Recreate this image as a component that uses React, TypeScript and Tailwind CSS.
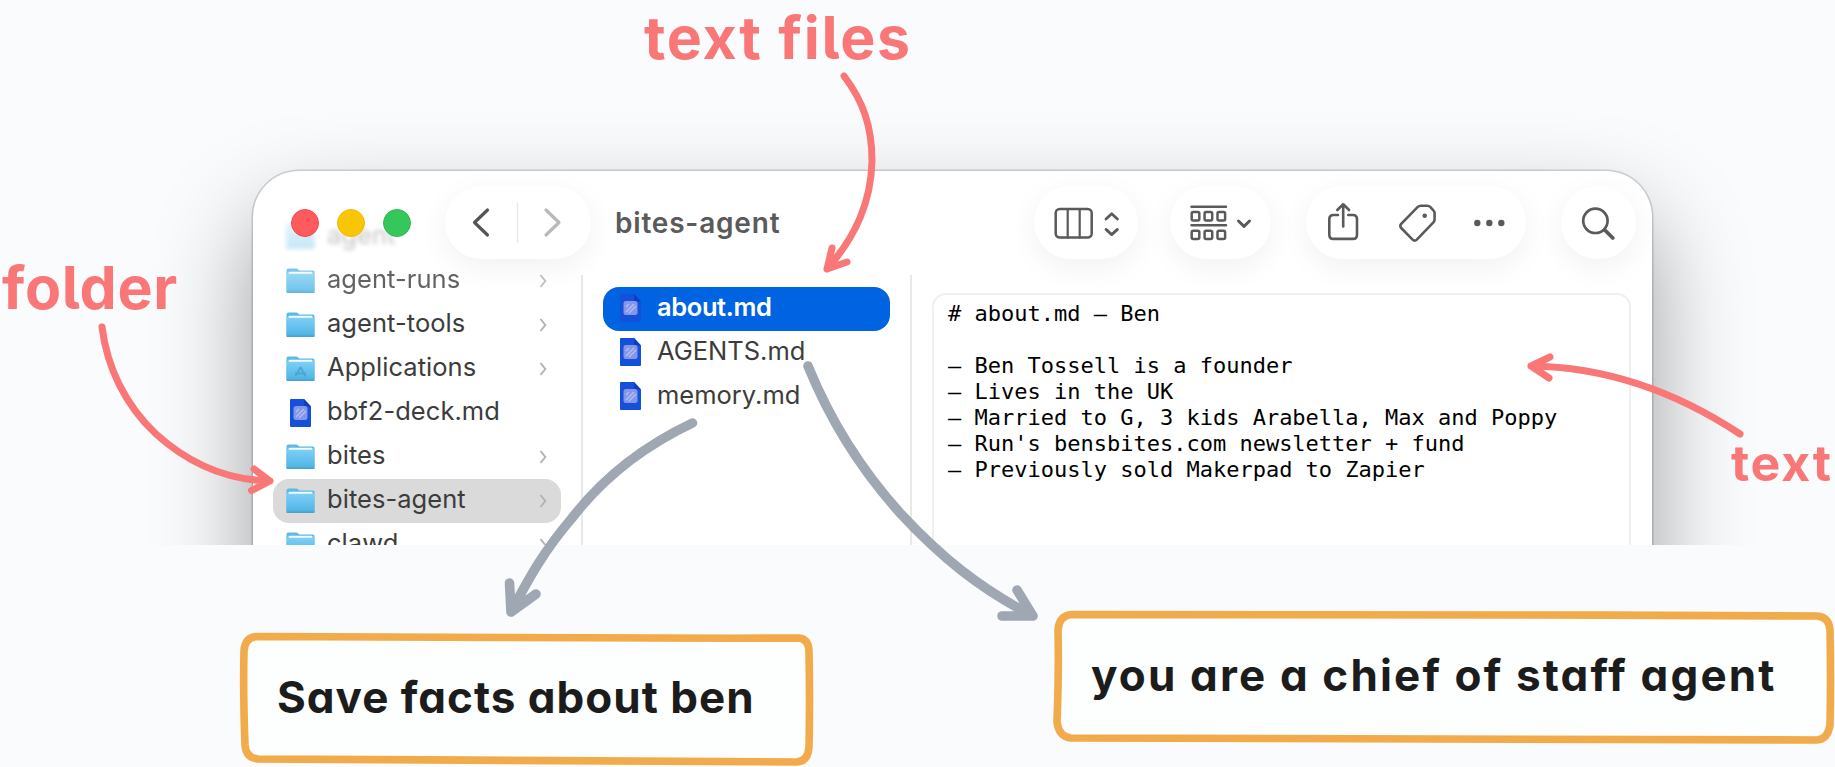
import React from "react";
import clsx from "clsx";

type Entry = {
  name: string;
  kind: "folder" | "apps" | "doc";
  selected?: boolean;
  fade?: string;
};

const SIDEBAR: Entry[] = [
  { name: "agent", kind: "folder", fade: "opacity-30 blur-[2px]" },
  { name: "agent-runs", kind: "folder", fade: "opacity-80" },
  { name: "agent-tools", kind: "folder" },
  { name: "Applications", kind: "apps" },
  { name: "bbf2-deck.md", kind: "doc" },
  { name: "bites", kind: "folder" },
  { name: "bites-agent", kind: "folder", selected: true },
  { name: "clawd", kind: "folder" },
];

const FILES = ["about.md", "AGENTS.md", "memory.md"];

const PREVIEW = `# about.md — Ben

– Ben Tossell is a founder
– Lives in the UK
– Married to G, 3 kids Arabella, Max and Poppy
– Run's bensbites.com newsletter + fund
– Previously sold Makerpad to Zapier`;

const FolderIcon: React.FC<{ apps?: boolean }> = ({ apps }) => (
  <svg width="29" height="26" viewBox="0 0 29 26">
    <defs>
      <linearGradient id="folder" x1="0" y1="0" x2="0" y2="1">
        <stop offset="0" stopColor="#7fd0f7" />
        <stop offset="0.85" stopColor="#52b7e6" />
        <stop offset="1" stopColor="#479fca" />
      </linearGradient>
    </defs>
    <path d="M0.5 2.5Q0.5 0.5 2.5 0.5H10Q11.5 0.5 12.5 1.8L13.3 2.4H27Q28.5 2.4 28.5 4V24Q28.5 25 27.5 25H1.5Q0.5 25 0.5 24Z" fill="#5fb9e4" />
    <path d="M0.5 7Q0.5 5 2.5 5H26.5Q28.5 5 28.5 7V24Q28.5 25 27.5 25H1.5Q0.5 25 0.5 24Z" fill="url(#folder)" />
    <rect x="2.5" y="3.8" width="24" height="2" rx="0.8" fill="#f3fbff" />
    {apps && (
      <path d="M14.5 11L9.5 20.5M14.5 11L19.5 20.5M9 17.5H20" stroke="#4aa6d3" strokeWidth="1.8" fill="none" />
    )}
  </svg>
);

const DocIcon: React.FC = () => (
  <svg width="21" height="28" viewBox="0 0 21 28">
    <path d="M0 1Q0 0 1 0H14L21 7.5V27Q21 28 20 28H1Q0 28 0 27Z" fill="#1450dc" />
    <path d="M14 0L21 7.5H16Q14 7.5 14 5.5Z" fill="#0d3fbd" />
    <rect x="3.5" y="7" width="14" height="14" rx="2.5" fill="#8496e6" />
    <path d="M6 18L14 10M9 19L16 12M6 13L9 10" stroke="#b5c0f3" strokeWidth="1.3" />
  </svg>
);

const Pill: React.FC<{ className?: string; children: React.ReactNode }> = ({ className, children }) => (
  <div
    className={clsx(
      "flex h-[73px] items-center rounded-full bg-white shadow-[0_8px_30px_rgba(0,0,0,0.06)]",
      className
    )}
  >
    {children}
  </div>
);

const Toolbar: React.FC = () => (
  <header className="relative z-10 flex h-[104px] items-start pt-[15px] pr-4 pl-[38px] text-[#5a5a5a]">
    <div className="flex h-[73px] items-center gap-[18px]">
      <span className="size-7 rounded-full border border-[#f2484c] bg-[#ff5b5f]" />
      <span className="size-7 rounded-full border border-[#efbb04] bg-[#f9c606]" />
      <span className="size-7 rounded-full border border-[#2fba4f] bg-[#35c75a]" />
    </div>
    <Pill className="ml-[34px] w-[146px]">
      <svg width="146" height="73" viewBox="0 0 146 73" fill="none" strokeWidth="3.2" strokeLinecap="round" strokeLinejoin="round">
        <path d="M42.5 24L29.5 36.5L42.5 49" stroke="#555" />
        <path d="M72.5 17V56" stroke="#e9e9e9" strokeWidth="1.5" />
        <path d="M101 24L114 36.5L101 49" stroke="#b9b9b9" />
      </svg>
    </Pill>
    <h1 className="ml-6 text-[28px] leading-[74px] font-semibold tracking-[0.8px] whitespace-nowrap">
      bites-agent
    </h1>
    <div className="ml-auto flex">
      <Pill className="w-[104px]">
        <svg width="104" height="73" viewBox="0 0 104 73" fill="none" stroke="currentColor" strokeWidth="2.5" strokeLinecap="round" strokeLinejoin="round">
          <rect x="21.7" y="23" width="36" height="28.6" rx="4" />
          <path d="M33.7 23V51.6M45.7 23V51.6" strokeWidth="2.2" />
          <path d="M72 33L77.7 27.8L83.4 33M72 43.4L77.7 48.6L83.4 43.4" strokeWidth="2.8" />
        </svg>
      </Pill>
      <Pill className="ml-8 w-[101px]">
        <svg width="101" height="73" viewBox="0 0 101 73" fill="none" stroke="currentColor" strokeWidth="2.5" strokeLinecap="round" strokeLinejoin="round">
          <path d="M21.5 20.7H56M21.5 39.3H56" />
          <rect x="21.7" y="26" width="7.6" height="8.4" rx="1.5" />
          <rect x="34.6" y="26" width="7.6" height="8.4" rx="1.5" />
          <rect x="47.5" y="26" width="7.6" height="8.4" rx="1.5" />
          <rect x="21.7" y="44.7" width="7.6" height="8.4" rx="1.5" />
          <rect x="34.6" y="44.7" width="7.6" height="8.4" rx="1.5" />
          <rect x="47.5" y="44.7" width="7.6" height="8.4" rx="1.5" />
          <path d="M68.5 35L74 40.4L79.5 35" strokeWidth="3" />
        </svg>
      </Pill>
      <Pill className="ml-[35px] w-[220px]">
        <svg width="220" height="73" viewBox="0 0 220 73" fill="none" stroke="currentColor" strokeWidth="2.6" strokeLinecap="round" strokeLinejoin="round">
          <path d="M32 29H27.5Q23.3 29 23.3 33.2V48.7Q23.3 52.9 27.5 52.9H46.8Q51 52.9 51 48.7V33.2Q51 29 46.8 29H42.3" />
          <path d="M37.2 40.5V18.5M31.3 24L37.2 18.3L43.1 24" />
          <path d="M95.2 37.8L111.8 20.9Q113 19.7 114.8 19.7H121.5Q123 19.7 124.2 20.9L127.4 24.3Q128.6 25.5 128.6 27V33.6Q128.6 35.2 127.4 36.4L110.8 53.6Q108.7 55.6 106.6 53.6L95.2 42Q93.4 39.9 95.2 37.8Z" />
          <g fill="currentColor" stroke="none">
            <circle cx="118.7" cy="29.7" r="2.3" />
            <circle cx="171.3" cy="37" r="3.2" />
            <circle cx="183.3" cy="37" r="3.2" />
            <circle cx="195.3" cy="37" r="3.2" />
          </g>
        </svg>
      </Pill>
      <Pill className="ml-[35px] w-[75px]">
        <svg width="75" height="73" viewBox="0 0 75 73" fill="none" stroke="currentColor" strokeWidth="2.7" strokeLinecap="round">
          <circle cx="34.4" cy="34.8" r="12.2" />
          <path d="M43.8 44L51.8 52" strokeWidth="3.8" />
        </svg>
      </Pill>
    </div>
  </header>
);

const Finder: React.FC = () => (
  <div className="ml-[253px] h-[900px] w-[1399px] shrink-0 rounded-[46px] bg-white shadow-[0_0_0_1.5px_rgba(0,0,0,0.15),0_46px_96px_rgba(0,0,0,0.38)]">
    <Toolbar />
    <div className="flex h-full text-[25.5px] text-[#3c3c3c]">
      <ul className="-mt-[60px] w-[328px] pr-5 pl-5">
        {SIDEBAR.map((item) => (
          <li
            key={item.name}
            className={clsx(
              "flex h-11 items-center rounded-2xl pr-[14px] pl-[13px]",
              item.selected && "bg-[#dadada]",
              item.fade
            )}
          >
            <span className="flex w-[29px] justify-center">
              {item.kind === "doc" ? <DocIcon /> : <FolderIcon apps={item.kind === "apps"} />}
            </span>
            <span className="ml-3 pb-[3px] tracking-[0.05px] whitespace-nowrap">{item.name}</span>
            {item.kind !== "doc" && (
              <svg className="ml-auto" width="8" height="14" viewBox="0 0 8 14" fill="none" stroke="#b4b4b4" strokeWidth="2">
                <path d="M1.5 1L6.3 7L1.5 13" />
              </svg>
            )}
          </li>
        ))}
      </ul>
      <ul className="w-[331px] border-x-2 border-[#e8e8e8] pt-3 pr-5 pl-5">
        {FILES.map((name, i) => (
          <li
            key={name}
            className={clsx(
              "flex h-11 items-center rounded-2xl pb-[3px] pl-[17px] whitespace-nowrap",
              i === 0 && "bg-[#0063e1] font-semibold tracking-[-0.4px] text-white"
            )}
          >
            <DocIcon />
            <span className="ml-4">{name}</span>
          </li>
        ))}
      </ul>
      <div className="flex-1 pt-[18px] pr-[21px] pl-5">
        <pre className="h-full rounded-[14px] border-2 border-[#f0f0f0] pt-[6px] pl-[14px] font-['DejaVu_Sans_Mono',monospace] text-[22px] leading-[26px] text-black">
          {PREVIEW}
        </pre>
      </div>
    </div>
  </div>
);

// Hand drawn arrows: a curved shaft plus a two-stroke head
const Arrows: React.FC = () => (
  <svg
    className="pointer-events-none absolute inset-0 z-20"
    width="1835"
    height="767"
    viewBox="0 0 1835 767"
    fill="none"
    strokeLinecap="round"
    strokeLinejoin="round"
  >
    <g stroke="#f97777" strokeWidth="7">
      <path d="M102 327C107 367 125 405 156 434C188 463 226 480 270 481M254 469L270 481L251.500 490.500" />
      <path d="M844 76C863 101 872 126 872 161C871 202 856 236 827 269M832 248L827 269L847 262" />
      <path d="M1740 434C1678 393 1607 367 1531 366M1550 357L1531 366L1549 378" />
    </g>
    <g stroke="#9fa7b3" strokeWidth="9.6">
      <path d="M692.500 423C646 445 606 474 572 518C544 551 530 576 511 612M509.500 583L511 612L536 594" />
      <path d="M808 366C832 425 863 472 901 514C941 557 979 588 1033 616M1017 590L1033 616L1002 616" />
    </g>
  </svg>
);

const Note: React.FC<{ className: string; outline: string; children: React.ReactNode }> = ({
  className,
  outline,
  children,
}) => (
  <div className={clsx("absolute h-[134px]", className)}>
    <svg className="absolute inset-0 size-full overflow-visible">
      <path d={outline} fill="#fdfefe" stroke="#f1ab4a" strokeWidth="7.600" strokeLinejoin="round" />
    </svg>
    <p className="relative pl-[38px] text-[44px] leading-none font-bold whitespace-nowrap text-[#1c1c1c]">
      {children}
    </p>
  </div>
);

const hand = "font-['Inter','Noto_Sans',sans-serif] [font-feature-settings:'cv11','cv05']";

export default function App() {
  return (
    <main className="relative h-[767px] w-[1835px] overflow-hidden bg-[#f9fbfd] font-['Inter','Noto_Sans',sans-serif]">
      <section className="h-[545px] overflow-hidden pt-[171px]">
        <Finder />
      </section>

      <div className={hand}>
        <p className="absolute top-[8px] left-[644px] z-20 text-[59px] leading-none font-bold tracking-[1.7px] whitespace-nowrap text-[#f97777]">
          text files
        </p>
        <p className="absolute top-[258px] left-[2px] z-20 text-[59px] leading-none font-bold tracking-[0.7px] whitespace-nowrap text-[#f97777]">
          folder
        </p>
        <p className="absolute top-[438px] left-[1731px] z-20 text-[50px] leading-none font-bold tracking-[1.8px] whitespace-nowrap text-[#f97777]">
          text
        </p>
        <Note
          className="top-[632px] left-[239px] w-[575px] pt-[43px] tracking-[1px]"
          outline="M18 4.500C320 5 420 7 560 6Q570 7 570 20Q571 70 570 115Q569 130 557 130C400 129 200 128 19 127Q7 126 6 113Q4 60 5 19Q6 5 18 4.500Z"
        >
          Save facts about ben
        </Note>
        <Note
          className="top-[610px] left-[1053px] w-[781px] pt-[43px] tracking-[2.15px]"
          outline="M18 4.500C320 4 520 5 764 6Q776 7 777 20Q778 70 777 115Q775 129 764 130C500 129 240 129 18 128Q6 127 4 112Q6 60 5 20Q6 6 18 4.500Z"
        >
          you are a chief of staff agent
        </Note>
      </div>

      <Arrows />
    </main>
  );
}
